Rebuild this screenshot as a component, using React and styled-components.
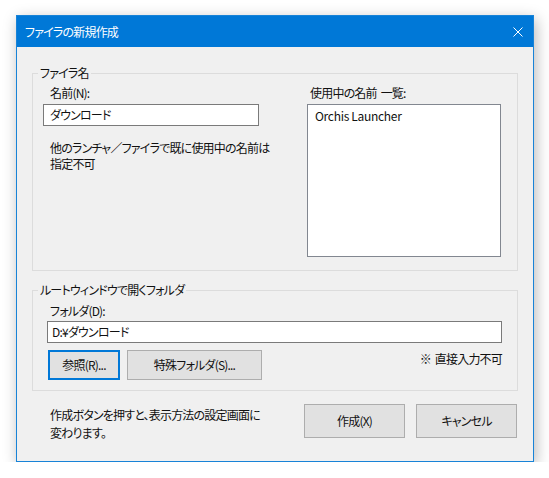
import React from "react";
import styled, { createGlobalStyle } from "styled-components";

const GlobalStyle = createGlobalStyle`
  body {
    margin: 0;
    background: #ffffff;
    font-family: "Noto Sans CJK JP", "Noto Sans", sans-serif;
    font-size: 12px;
    letter-spacing: -0.8px;
    word-spacing: 2px;
    font-feature-settings: "palt";
    color: #111111;
  }
`;

const Page = styled.div`
  padding: 15px 0 0 16px;
`;

const Window = styled.div`
  width: 518px;
  box-sizing: border-box;
  border: 1px solid #1883d7;
  background: #f0f0f0;
  box-shadow: 2px 4px 14px rgba(0, 0, 0, 0.28);
`;

const TitleBar = styled.div`
  height: 31px;
  background: #0078d7;
  color: #ffffff;
  display: flex;
  align-items: center;
  justify-content: space-between;
  padding: 0 10px 0 8px;
  line-height: 16px;
`;

const Body = styled.div`
  padding: 18px 15px 19px 15px;
`;

const Group = styled.fieldset`
  margin: 0 0 ${(p) => p.$gap || 0}px 0;
  padding: 0;
  min-width: 0;
  border: 1px solid #dcdcdc;
`;

const Legend = styled.legend`
  margin-left: 5px;
  padding: 0 2px;
  line-height: 16px;
`;

const GroupInner = styled.div`
  padding: ${(p) => p.$pad};
`;

const Columns = styled.div`
  display: flex;
  justify-content: space-between;
`;

const Column = styled.div`
  display: flex;
  flex-direction: column;
  width: ${(p) => p.$width}px;
`;

const Label = styled.div`
  line-height: 16px;
  padding-left: ${(p) => p.$indent || 0}px;
  margin-bottom: ${(p) => p.$gap || 3}px;
`;

const TextBox = styled.div`
  height: 22px;
  box-sizing: border-box;
  border: 1px solid #7a7a7a;
  background: #ffffff;
  display: flex;
  align-items: center;
  padding-left: ${(p) => p.$indent || 6}px;
  line-height: 16px;
`;

const ListBox = styled.div`
  height: 153px;
  box-sizing: border-box;
  border: 1px solid #828790;
  background: #ffffff;
  padding: 3px 7px;
  line-height: 16px;
  letter-spacing: -0.3px;
  word-spacing: 0;
`;

const Note = styled.div`
  margin-top: 14px;
  padding-left: 7px;
  line-height: 16px;
  white-space: nowrap;
`;

const ButtonRow = styled.div`
  display: flex;
  align-items: flex-start;
  gap: 7px;
  margin-top: 7px;
  padding-left: 1px;
`;

const Button = styled.button`
  width: ${(p) => p.$width}px;
  height: ${(p) => p.$height}px;
  box-sizing: border-box;
  background: #e1e1e1;
  border: ${(p) => (p.$focused ? "2px solid #0078d7" : "1px solid #adadad")};
  font: inherit;
  letter-spacing: inherit;
  color: #111111;
  padding: 0;
  line-height: 16px;
`;

const Hint = styled.div`
  margin-left: auto;
  margin-top: 1px;
  line-height: 16px;
`;

const Footer = styled.div`
  display: flex;
  align-items: flex-start;
  margin-top: 13px;
  padding-right: 1px;
`;

const FooterText = styled.div`
  margin: 2px 0 0 18px;
  line-height: 18px;
  flex: 1;
  white-space: nowrap;
`;

const FooterButtons = styled.div`
  display: flex;
  gap: 11px;
`;

const CloseIcon = () => (
  <svg width="10" height="10" viewBox="0 0 10 10">
    <path d="M0.5 0.5 L9.5 9.5 M9.5 0.5 L0.5 9.5" stroke="#ffffff" strokeWidth="1" />
  </svg>
);

export default function App() {
  return (
    <Page>
      <GlobalStyle />
      <Window>
        <TitleBar>
          <span>ファイラの新規作成</span>
          <CloseIcon />
        </TitleBar>
        <Body>
          <Group $gap={11}>
            <Legend>ファイラ名</Legend>
            <GroupInner $pad="4px 16px 13px 10px">
              <Columns>
                <Column $width={216}>
                  <Label $indent={7}>名前(N):</Label>
                  <TextBox>ダウンロード</TextBox>
                  <Note>
                    他のランチャ／ファイラで既に使用中の名前は
                    <br />
                    指定不可
                  </Note>
                </Column>
                <Column $width={194}>
                  <Label $indent={3}>使用中の名前 一覧:</Label>
                  <ListBox>Orchis Launcher</ListBox>
                </Column>
              </Columns>
            </GroupInner>
          </Group>
          <Group>
            <Legend>ルートウィンドウで開くフォルダ</Legend>
            <GroupInner $pad="5px 15px 10px 14px">
              <Label $indent={3} $gap={2}>フォルダ(D):</Label>
              <TextBox $indent={4}>D:¥ダウンロード</TextBox>
              <ButtonRow>
                <Button $width={72} $height={30} $focused>参照(R)...</Button>
                <Button $width={135} $height={30}>特殊フォルダ(S)...</Button>
                <Hint>※ 直接入力不可</Hint>
              </ButtonRow>
            </GroupInner>
          </Group>
          <Footer>
            <FooterText>
              作成ボタンを押すと、表示方法の設定画面に
              <br />
              変わります。
            </FooterText>
            <FooterButtons>
              <Button $width={101} $height={34}>作成(X)</Button>
              <Button $width={101} $height={34}>キャンセル</Button>
            </FooterButtons>
          </Footer>
        </Body>
      </Window>
    </Page>
  );
}
